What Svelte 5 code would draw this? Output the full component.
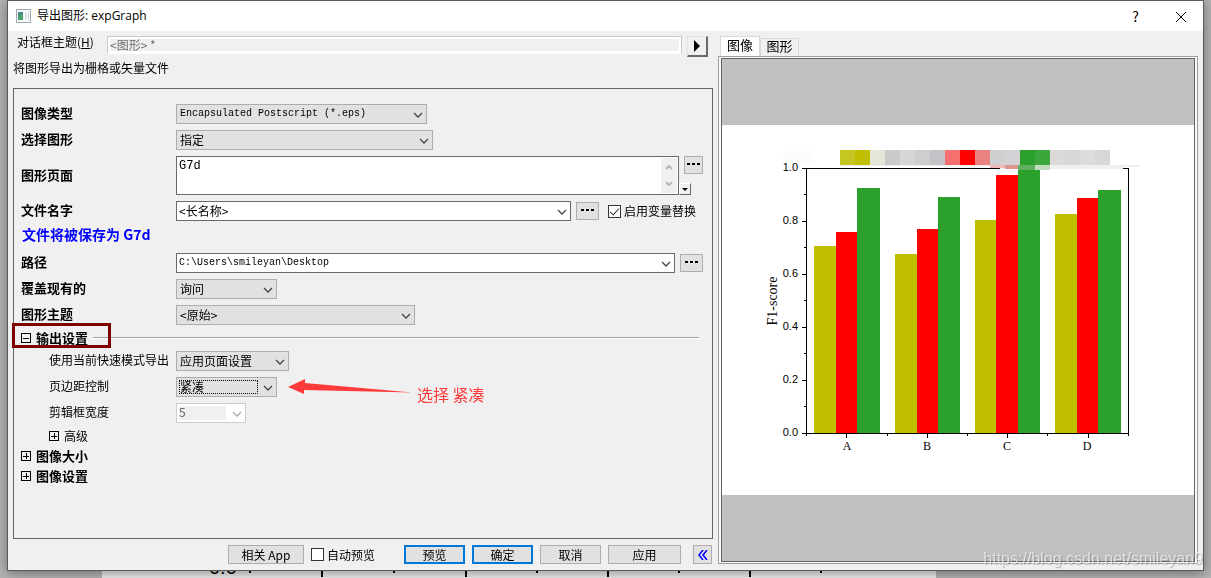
<script lang="ts">
  let tab = $state("image");
  let pages = $state("G7d");
  let fileName = $state("<长名称>");
  let path = $state("C:\\Users\\smileyan\\Desktop");
  let useVariables = $state(true);
  let autoPreview = $state(false);

  const BASE = 308;
  const series = ["#bfbf00", "#ff0000", "#2ca02c"];
  const groups = [
    { name: "A", x: [92, 114, 135, 158], tops: [121, 107, 63] },
    { name: "B", x: [173, 195, 216, 238], tops: [129, 104, 72] },
    { name: "C", x: [253, 274, 296, 318], tops: [95, 50, 44] },
    { name: "D", x: [333, 355, 376, 399], tops: [89, 73, 65] }
  ];
  const yTicks = ["1.0", "0.8", "0.6", "0.4", "0.2", "0.0"];
  const legend = [
    "#c6c623", "#bfbf00", "#e5e6d8", "#cacaca", "#d7d6d4", "#cfcecc",
    "#c5c3c8", "#f77070", "#ff0000", "#ea8282", "#cfcfcf", "#d2d2d6",
    "#2ca02c", "#3ba63b", "#dbdad8", "#d8d8d8", "#dedddb", "#d6d7d9"
  ];
  const backTicks = [147, 219, 291, 363, 434, 505, 576, 647, 718];
</script>

{#snippet chevron()}
  <svg class="chevron" viewBox="0 0 10 6" aria-hidden="true"><path d="M1 1 L5 5 L9 1" /></svg>
{/snippet}

{#snippet combo(id: string, value: string, size: string)}
  <div class="combo {size}">
    <select {id}><option>{value}</option></select>
    {@render chevron()}
  </div>
{/snippet}

{#snippet toggle(open: boolean)}
  <svg class="toggle" viewBox="0 0 10 10" aria-hidden="true">
    <path d={open ? "M.5 .5h9v9h-9z M2 5h6" : "M.5 .5h9v9h-9z M2 5h6 M5 2v6"} />
  </svg>
{/snippet}

<div class="desktop">
  <div class="dialog" role="dialog" aria-labelledby="title">
    <header class="titlebar">
      <svg class="app-icon" viewBox="0 0 15 14" aria-hidden="true">
        <rect x=".5" y=".5" width="14" height="13" fill="#f4f6f7" stroke="#a3abb0" />
        <rect x="2" y="3" width="5" height="8" fill="#4f8a8b" />
        <rect x="3" y="6" width="4" height="5" fill="#4aa76b" />
        <rect x="9" y="3" width="2" height="8" fill="#e2e4e6" />
        <rect x="12" y="3" width="1" height="8" fill="#d0d4d6" />
      </svg>
      <h1 id="title">导出图形: expGraph</h1>
      <button class="caption-btn" aria-label="Help">?</button>
      <button class="caption-btn" aria-label="Close">
        <svg viewBox="0 0 10 10" aria-hidden="true"><path d="M0 0 L10 10 M10 0 L0 10" /></svg>
      </button>
    </header>

    <div class="body">
      <section class="settings">
        <div class="theme-row">
          <label for="theme">对话框主题(<u>H</u>)</label>
          <input id="theme" value="<图形> *" readonly />
          <button class="arrow-btn" aria-label="Theme menu">
            <svg viewBox="0 0 6 12" aria-hidden="true"><path d="M0 0 L6 6 L0 12z" /></svg>
          </button>
        </div>
        <p class="description">将图形导出为栅格或矢量文件</p>

        <div class="panel">
          <div class="row">
            <label for="type">图像类型</label>
            {@render combo("type", "Encapsulated Postscript (*.eps)", "w-type mono")}
          </div>
          <div class="row">
            <label for="select">选择图形</label>
            {@render combo("select", "指定", "w-select")}
          </div>
          <div class="row tall">
            <label for="pages">图形页面</label>
            <div class="pages">
              <textarea id="pages" bind:value={pages}></textarea>
              <div class="scroll">
                <svg viewBox="0 0 8 6" aria-hidden="true"><path d="M1 5 L4 2 L7 5" /></svg>
                <svg viewBox="0 0 8 6" aria-hidden="true"><path d="M1 1 L4 4 L7 1" /></svg>
              </div>
            </div>
            <div class="side">
              <button class="dots" aria-label="Browse pages"><i></i><i></i><i></i></button>
              <button class="drop" aria-label="Page menu">
                <svg viewBox="0 0 6 3" aria-hidden="true"><path d="M0 0h6l-3 3z" /></svg>
              </button>
            </div>
          </div>
          <div class="row">
            <label for="filename">文件名字</label>
            <div class="combo edit w-name">
              <input id="filename" bind:value={fileName} />
              {@render chevron()}
            </div>
            <button class="dots" aria-label="Browse names"><i></i><i></i><i></i></button>
            <label class="check">
              <input type="checkbox" bind:checked={useVariables} />启用变量替换
            </label>
          </div>
          <p class="row note">文件将被保存为 G7d</p>
          <div class="row">
            <label for="path">路径</label>
            <div class="combo edit mono grow">
              <input id="path" bind:value={path} />
              {@render chevron()}
            </div>
            <button class="dots" aria-label="Browse path"><i></i><i></i><i></i></button>
          </div>
          <div class="row">
            <label for="overwrite">覆盖现有的</label>
            {@render combo("overwrite", "询问", "w-small")}
          </div>
          <div class="row">
            <label for="graph-theme">图形主题</label>
            {@render combo("graph-theme", "<原始>", "w-theme")}
          </div>

          <button class="branch marked">
            {@render toggle(true)}输出设置<span class="rule"></span>
          </button>
          <div class="row sub">
            <label for="mode">使用当前快速模式导出</label>
            {@render combo("mode", "应用页面设置", "w-mode")}
          </div>
          <div class="row sub">
            <label for="margin">页边距控制</label>
            {@render combo("margin", "紧凑", "w-small focused")}
            <div class="hint">
              <svg viewBox="0 0 124 18" aria-hidden="true">
                <path d="M0 9 L17 1 V5 L124 14.5 L16 12 V16z" />
              </svg>
              <span>选择 紧凑</span>
            </div>
          </div>
          <div class="row sub">
            <label for="clip">剪辑框宽度</label>
            <div class="combo off w-clip">
              <select id="clip" disabled><option>5</option></select>
              {@render chevron()}
            </div>
          </div>
          <button class="branch inner">{@render toggle(false)}高级</button>
          <button class="branch">{@render toggle(false)}图像大小</button>
          <button class="branch">{@render toggle(false)}图像设置</button>
        </div>

        <footer class="actions">
          <button class="btn wide">相关 App</button>
          <label class="check auto">
            <input type="checkbox" bind:checked={autoPreview} />自动预览
          </label>
          <button class="btn primary">预览</button>
          <button class="btn primary">确定</button>
          <button class="btn">取消</button>
          <button class="btn apply">应用</button>
          <button class="btn fold" aria-label="Collapse preview">
            <svg viewBox="0 0 10 10" aria-hidden="true"><path d="M5 0 L1 5 L5 10 M9 0 L5 5 L9 10" /></svg>
          </button>
        </footer>
      </section>

      <section class="preview">
        <div class="tabs" role="tablist">
          <button role="tab" aria-selected={tab === "image"} class:active={tab === "image"} onclick={() => (tab = "image")}>图像</button>
          <button role="tab" aria-selected={tab === "graph"} class:active={tab === "graph"} onclick={() => (tab = "graph")}>图形</button>
        </div>
        <div class="frame">
          <div class="canvas">
            <svg class="chart" viewBox="0 0 472 370" shape-rendering="crispEdges">
              <rect width="472" height="370" fill="#fff" />
              <rect x="61" y="26" width="29" height="12" fill="#fafbfb" />
              <path class="axis" d="M84 43.5 H406.5 V311" />
              <rect x="118" y="40" width="150" height="1" fill="#eee" />
              <rect x="278" y="40" width="123" height="4" fill="#efefef" />
              <rect x="401" y="40" width="17" height="2" fill="#efefef" />
              {#each groups as group}
                {#each series as color, i}
                  <rect x={group.x[i]} y={group.tops[i]} width={group.x[i + 1] - group.x[i]} height={BASE - group.tops[i]} fill={color} />
                {/each}
              {/each}
              {#each legend as color, i}
                <rect x={118 + i * 15} y="25" width="15" height="15" fill={color} />
              {/each}
              <rect x="268" y="40" width="15" height="3" fill="#f0b8b8" />
              <rect x="283" y="40" width="13" height="4" fill="#dc9890" />
              <rect x="296" y="40" width="17" height="5" fill="#60b060" />
              <rect x="313" y="40" width="15" height="5" fill="#c0dcc0" />
              <path class="axis" d="M84.5 43 V311 M80 308.5 H407" />
              {#each yTicks as label, i}
                <path class="axis" d="M80 {43.5 + i * 53} h4" />
                {#if i < 5}<path class="axis" d="M82 {69.5 + i * 53} h2" />{/if}
                <text class="num" x="76" y={46 + i * 53}>{label}</text>
              {/each}
              {#each groups as group, i}
                <path class="axis" d="M{124.5 + i * 80.5} 309 v4" />
                {#if i < 3}<path class="axis" d="M{165.5 + i * 80} 309 v2" />{/if}
                <text class="cat" x={125 + i * 80} y="325">{group.name}</text>
              {/each}
              <text class="cat name" x="-176" y="55" transform="rotate(-90)">F1-score</text>
            </svg>
          </div>
        </div>
      </section>
    </div>
  </div>

  <div class="behind">
    <svg width="834" height="7" aria-hidden="true">
      <text x="107" y="3">0.0</text>
      {#each backTicks as x, i}
        <rect {x} y="0" width="2" height={i % 2 ? 6 : 2} />
      {/each}
    </svg>
  </div>
  <div class="watermark">https://blog.csdn.net/smileyan9</div>
</div>

<style>
  :global(body) {
    background: #b4b4b4;
  }

  .desktop {
    position: relative;
    box-sizing: border-box;
    min-height: 100vh;
    padding: 0 7px;
    display: flex;
    flex-direction: column;
    overflow: hidden;
    font-family: "Noto Sans CJK SC", sans-serif;
    font-size: 12px;
    line-height: 16px;
    color: #000;
  }

  .desktop *,
  .desktop *::before {
    box-sizing: border-box;
  }

  h1,
  p {
    margin: 0;
  }

  button,
  input,
  select,
  textarea {
    margin: 0;
    font: inherit;
    color: inherit;
  }

  button {
    padding: 0;
  }

  .dialog {
    position: relative;
    z-index: 1;
    flex: 1;
    display: flex;
    flex-direction: column;
    background: #f0f0f0;
    border: 1px solid #5a5a5a;
    box-shadow: 0 2px 12px rgba(0, 0, 0, 0.4);
  }

  .titlebar {
    display: flex;
    align-items: center;
    height: 30px;
    padding-left: 8px;
    background: #fff;
  }

  .app-icon {
    width: 15px;
    height: 14px;
    margin-right: 6px;
  }

  h1 {
    flex: 1;
    font-family: "Open Sans", "Noto Sans CJK SC", sans-serif;
    font-size: 12px;
    font-weight: 400;
  }

  .caption-btn {
    width: 45px;
    height: 30px;
    border: 0;
    background: none;
    font-size: 14px;
  }

  .caption-btn svg {
    width: 10px;
    height: 10px;
    overflow: visible;
    stroke: #000;
    stroke-width: 1;
  }

  .body {
    flex: 1;
    display: grid;
    grid-template-columns: minmax(0, 1fr) minmax(0, 480px);
    gap: 5px;
    padding: 5px 5px 6px;
  }

  .settings {
    display: flex;
    flex-direction: column;
  }

  .theme-row {
    display: flex;
    align-items: flex-start;
    padding: 0 5px 0 4px;
    height: 21px;
  }

  .theme-row label {
    width: 90px;
    line-height: 12px;
  }

  .theme-row input {
    flex: 1;
    height: 18px;
    margin-right: 5px;
    padding: 0 0 2px;
    border: 1px solid #c8c8c8;
    border-bottom-color: #fff;
    outline: 0;
    box-shadow: inset 0 0 0 2px #fff;
    background: #f0f0f0;
    color: #6d6d6d;
    text-indent: 2px;
  }

  .arrow-btn {
    display: flex;
    align-items: center;
    justify-content: center;
    width: 21px;
    height: 21px;
    background: #f0f0f0;
    border: 1px solid #e3e3e3;
    border-right: 2px solid #696969;
    border-bottom: 2px solid #696969;
  }

  .arrow-btn svg {
    width: 6px;
    height: 12px;
  }

  .description {
    margin: 3px 0 12px;
  }

  .panel {
    flex: 1;
    padding: 12px 9px 0 7px;
    border: 1px solid #646464;
  }

  .row {
    display: flex;
    align-items: center;
    height: 26px;
  }

  .row > label:first-child {
    flex: 0 0 155px;
    padding-bottom: 2px;
    font-size: 13px;
    font-weight: 700;
  }

  .row.sub > label:first-child {
    padding-left: 28px;
    font-size: 12px;
    font-weight: 400;
    white-space: nowrap;
  }

  .row.tall {
    height: 45px;
  }

  .row.note {
    height: 20px;
    margin-bottom: 6px;
    padding-left: 1px;
    font-size: 14px;
    font-weight: 700;
    color: #0000ff;
  }

  .combo {
    position: relative;
    height: 20px;
  }

  .combo select,
  .combo input {
    appearance: none;
    display: block;
    width: 100%;
    height: 20px;
    padding: 0 20px 0 3px;
    border: 1px solid #adadad;
    border-radius: 0;
    outline: 0;
    background: #e1e1e1;
    line-height: 16px;
  }

  .combo.edit input {
    padding: 0 20px 2px 2px;
    border-color: #6a6a6a;
    background: #fff;
  }

  .combo.off select {
    padding: 0 20px 2px 2px;
    border-color: #ccc;
    background: #fff;
    color: #6d6d6d;
    opacity: 1;
  }

  .combo.off::before {
    content: "";
    position: absolute;
    inset: 3px 20px 3px 3px;
    background: #f0f0f0;
    mix-blend-mode: multiply;
  }

  .combo.focused::after {
    content: "";
    position: absolute;
    inset: 3px 19px 3px 3px;
    border: 1px dotted #000;
    pointer-events: none;
  }

  .mono {
    font-family: "Liberation Mono", monospace;
    font-size: 10px;
  }

  .w-type {
    width: 251px;
  }

  .w-select {
    width: 257px;
  }

  .w-name {
    width: 395px;
  }

  .w-theme {
    width: 239px;
  }

  .w-mode {
    width: 113px;
  }

  .w-small {
    width: 101px;
  }

  .w-clip {
    width: 70px;
  }

  .grow {
    flex: 1;
  }

  .chevron {
    position: absolute;
    right: 4px;
    top: 8px;
    width: 10px;
    height: 6px;
    fill: none;
    stroke: #444;
    stroke-width: 1.3;
    pointer-events: none;
  }

  .off .chevron {
    stroke: #aaa;
  }

  .pages {
    flex: 1;
    display: flex;
    height: 39px;
    padding: 1px;
    border: 1px solid #6a6a6a;
    background: #fff;
  }

  .pages textarea {
    flex: 1;
    padding: 0 1px;
    border: 0;
    outline: 0;
    resize: none;
    overflow: hidden;
    background: none;
    font-family: "Liberation Mono", "Noto Sans CJK SC", monospace;
  }

  .scroll {
    display: flex;
    flex-direction: column;
    align-items: center;
    justify-content: space-between;
    width: 16px;
    padding: 6px 0;
    background: #f0f0f0;
  }

  .scroll svg {
    width: 8px;
    height: 6px;
    fill: none;
    stroke: #b8b8b8;
    stroke-width: 2;
  }

  .side {
    display: flex;
    flex-direction: column;
    justify-content: space-between;
    width: 24px;
    height: 39px;
  }

  .dots {
    display: flex;
    align-items: center;
    justify-content: center;
    gap: 2px;
    width: 23px;
    height: 18px;
    margin-left: 5px;
    padding-bottom: 2px;
    border: 1px solid #adadad;
    background: #e1e1e1;
  }

  .side .dots {
    width: 19px;
  }

  .dots i {
    width: 3px;
    height: 2px;
    background: #000;
  }

  .drop {
    display: flex;
    align-items: center;
    justify-content: center;
    width: 12px;
    height: 12px;
    border: 1px solid #fff;
    border-right-color: #696969;
    border-bottom-color: #696969;
    background: #f0f0f0;
  }

  .drop svg {
    width: 6px;
    height: 3px;
  }

  .check {
    display: flex;
    align-items: center;
    gap: 3px;
    margin-left: 9px;
  }

  .check input {
    appearance: none;
    width: 13px;
    height: 13px;
    border: 1px solid #333;
    background: #fff;
  }

  .check input:checked::after {
    content: "";
    display: block;
    width: 4px;
    height: 8px;
    margin-left: 3px;
    border: solid #333;
    border-width: 0 1px 1px 0;
    transform: rotate(42deg);
  }

  .branch {
    position: relative;
    display: flex;
    align-items: center;
    gap: 5px;
    width: 100%;
    height: 20px;
    border: 0;
    background: none;
    font-size: 13px;
    font-weight: 700;
  }

  .branch.inner {
    padding-left: 28px;
    font-size: 12px;
    font-weight: 400;
  }

  .branch.marked::before {
    content: "";
    position: absolute;
    left: -9px;
    top: -5px;
    width: 99px;
    height: 25px;
    border: 3px solid #800000;
  }

  .rule {
    flex: 1;
    height: 2px;
    margin-right: 4px;
    border-top: 1px solid #a0a0a0;
    background: #fff;
  }

  .toggle {
    width: 10px;
    height: 10px;
    fill: none;
    stroke: #000;
    stroke-width: 1;
    shape-rendering: crispEdges;
  }

  .hint {
    display: flex;
    margin-left: 11px;
    gap: 5px;
    color: #ff3a3a;
    font-size: 16px;
    line-height: 32px;
    height: 18px;
  }

  .hint svg {
    width: 124px;
    height: 18px;
    fill: #ff3a3a;
  }

  .actions {
    display: flex;
    align-items: center;
    justify-content: flex-end;
    gap: 7px;
    padding: 6px 1px 0 0;
  }

  .btn {
    width: 61px;
    height: 19px;
    border: 1px solid #adadad;
    background: #e1e1e1;
    line-height: 15px;
  }

  .btn.wide {
    width: 76px;
  }

  .btn.apply {
    width: 73px;
  }

  .btn.primary {
    border: 2px solid #0078d7;
    line-height: 13px;
  }

  .btn.fold {
    display: flex;
    align-items: center;
    justify-content: center;
    width: 19px;
    margin-left: 5px;
  }

  .fold svg {
    width: 10px;
    height: 10px;
    fill: none;
    stroke: #0000ff;
    stroke-width: 1.5;
  }

  .check.auto {
    margin: 0 22px 0 0;
  }

  .preview {
    display: flex;
    flex-direction: column;
  }

  .tabs {
    display: flex;
    align-items: flex-end;
    height: 20px;
    padding-left: 2px;
  }

  .tabs button {
    width: 39px;
    height: 18px;
    padding-bottom: 3px;
    border: 1px solid #d9d9d9;
    border-bottom: 0;
    background: #f0f0f0;
    font-size: 13px;
    line-height: 14px;
  }

  .tabs button.active {
    width: 40px;
    height: 20px;
    background: #fff;
  }

  .frame {
    flex: 1;
    display: flex;
    padding: 1px 2px;
    border: 1px solid #a0a0a0;
    background: #f8f8ff;
  }

  .canvas {
    flex: 1;
    display: flex;
    align-items: center;
    border: 1px solid #646464;
    background: #c0c0c0;
  }

  .chart {
    display: block;
    width: 100%;
  }

  .axis {
    fill: none;
    stroke: #000;
    stroke-width: 1;
  }

  .num {
    font: 11px "Liberation Sans", sans-serif;
    text-anchor: end;
  }

  .cat {
    font: 12px "Liberation Serif", serif;
    text-anchor: middle;
  }

  .cat.name {
    font-size: 14px;
  }

  .behind {
    height: 7px;
    padding-left: 95px;
  }

  .behind svg {
    display: block;
    background: #ececec;
    font: 20px "Liberation Sans", sans-serif;
  }

  .watermark {
    position: absolute;
    z-index: 2;
    right: 8px;
    bottom: 9px;
    font-family: "Liberation Sans", sans-serif;
    font-size: 16px;
    line-height: 20px;
    color: rgba(255, 255, 255, 0.6);
    text-shadow: 1px 1px 1px rgba(90, 90, 90, 0.4);
  }
</style>
